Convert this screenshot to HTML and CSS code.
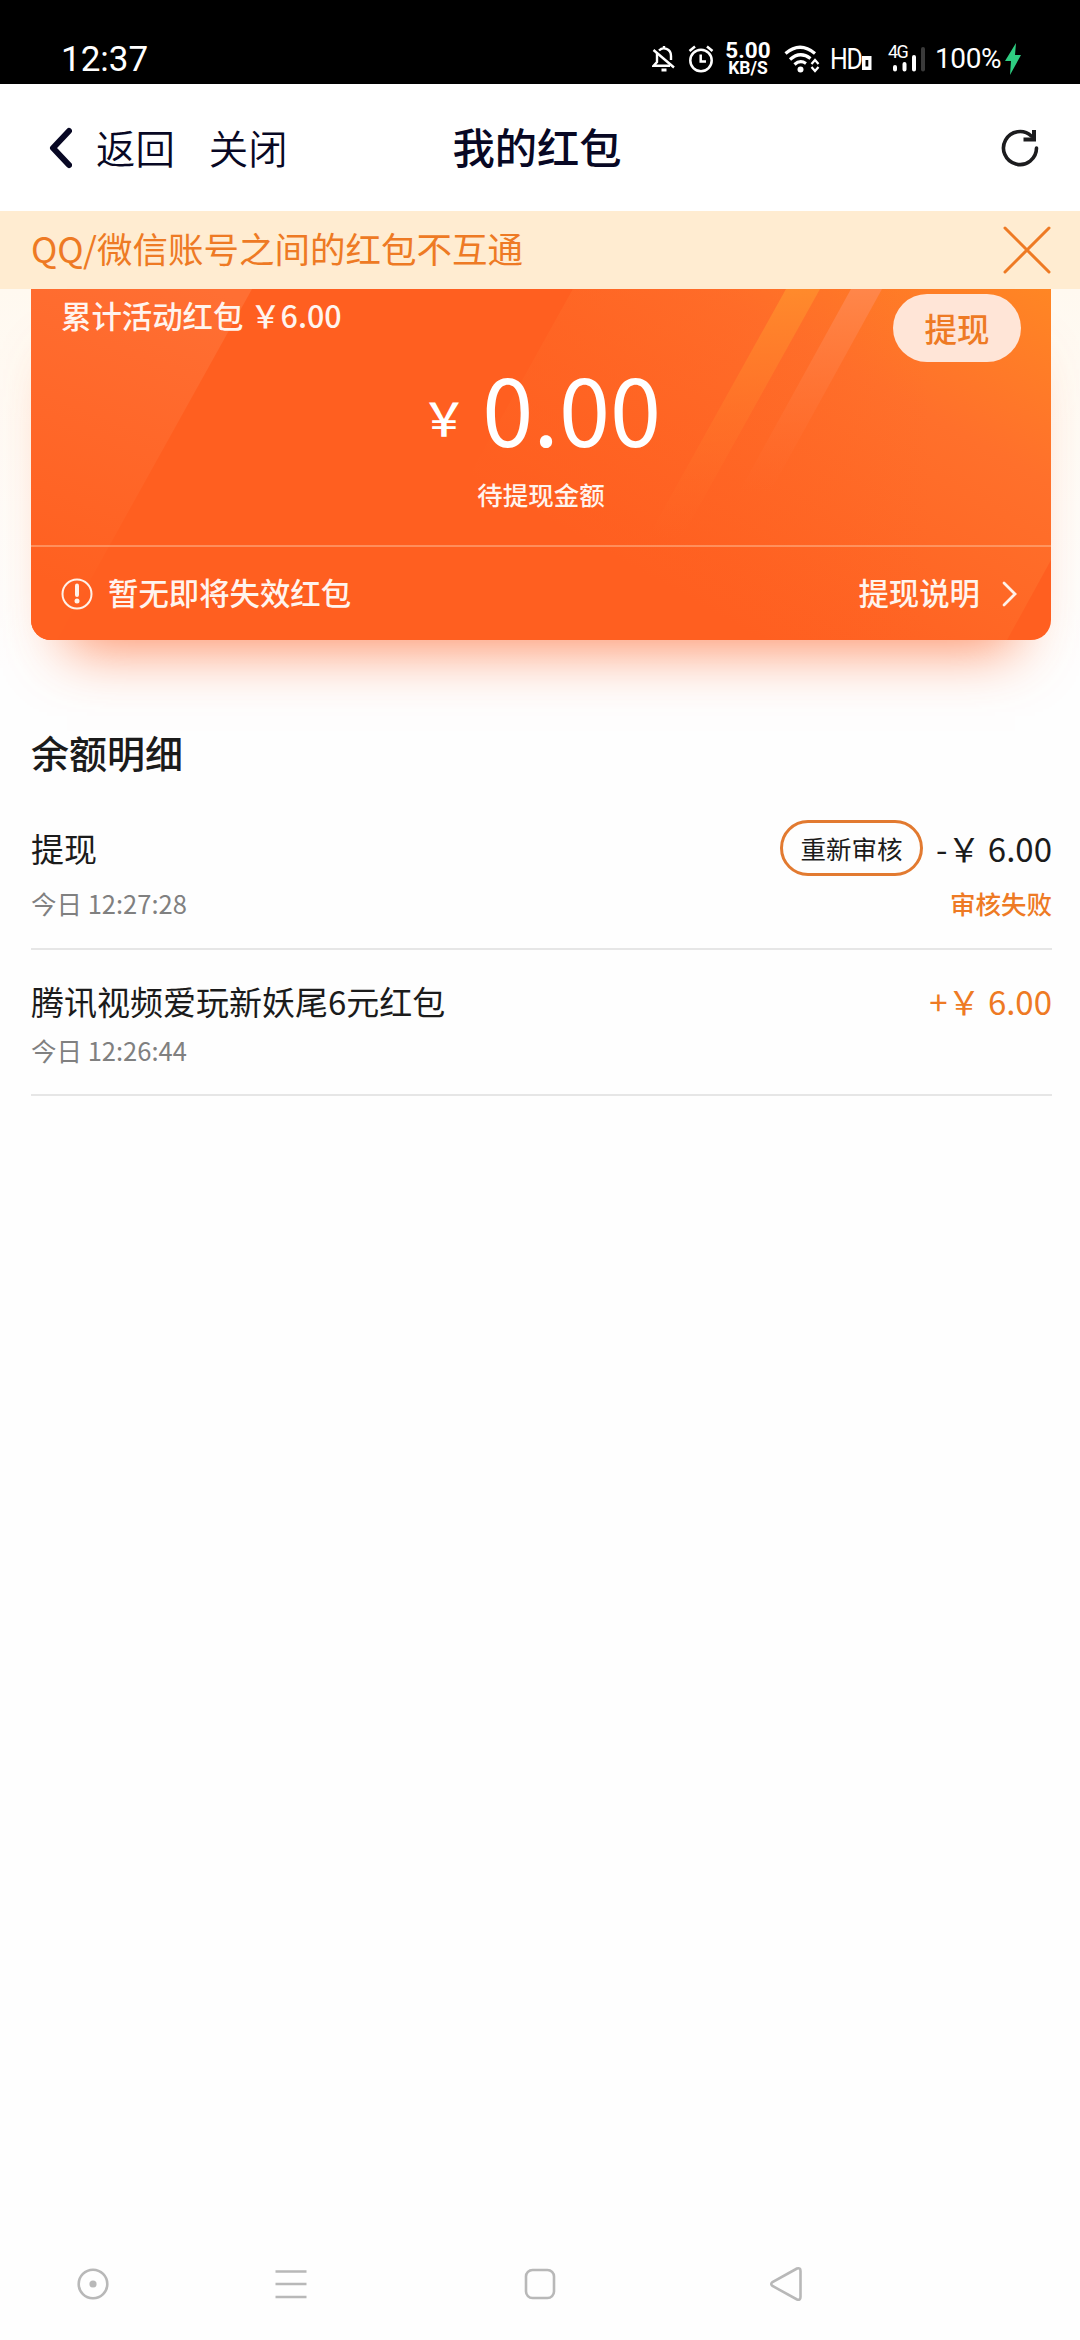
FILE: index.html
```html
<!DOCTYPE html>
<html lang="zh-CN">
<head>
<meta charset="utf-8">
<title>我的红包</title>
<link rel="stylesheet" href="styles.css">
</head>
<body>
<div class="screen">
  <header class="status">
    <span class="clock">12:37</span>
    <svg class="bell" width="24" height="28" viewBox="0 0 24 28" fill="none" stroke="#fff" stroke-width="2.4"><path d="M5 8v9l-3.500 3.800H18M7 5.500C11 1.500 19 3.500 19 11v4"/><path d="M12 1v3M1.500 5L22 22.500"/><path d="M9.500 25h5" stroke-width="3"/></svg>
    <svg class="alarm" width="26" height="28" viewBox="0 0 26 28" fill="none" stroke="#fff" stroke-width="2.500"><circle cx="13" cy="15.500" r="10.700"/><path d="M1.500 6L7 1.500M24.500 6L19 1.500M12.700 9.500v7H18"/></svg>
    <div class="speed"><b>5.00</b><b class="unit">KB/S</b></div>
    <svg class="wifi" width="36" height="30" viewBox="0 0 36 30" fill="none" stroke="#fff" stroke-width="3.200"><path d="M1.500 9.500Q16 -3 31 9.500"/><path d="M6 15.500Q16 6.500 26.500 14.500"/><path d="M10.500 20.500Q16 15.500 22 19.500"/><circle cx="16.500" cy="25.500" r="3" fill="#fff" stroke="none"/><path d="M27.500 20l3.500-4 3.500 4M27.500 23l3.500 4 3.500-4" stroke-width="2.200"/></svg>
    <span class="hd">HD</span>
    <svg class="sim" width="10" height="14" viewBox="0 0 10 14"><path fill="#fff" fill-rule="evenodd" d="M0 0h9.500v14H0zM3.500 4v6.500h2.800V4z"/></svg>
    <div class="signal">
      <span class="gen">4G</span>
      <svg width="36" height="28" viewBox="0 0 36 28" stroke="#fff" stroke-width="4" stroke-linecap="round"><path d="M7 22v2.500M16.500 19v5.500M26 12v12.500"/><path d="M35 4v20.500" stroke="#3a3a3a"/></svg>
    </div>
    <span class="battery">100%</span>
    <svg class="bolt" width="16" height="32" viewBox="0 0 16 32"><path fill="#2fce82" d="M11 0L0 18h6L5 32 16 12h-6z"/></svg>
  </header>

  <nav class="bar">
    <div class="left">
      <svg class="back" width="24" height="42" viewBox="0 0 24 42" fill="none" stroke="#080824" stroke-width="6" stroke-linecap="round" stroke-linejoin="round"><path d="M21 4L5 21l16 17"/></svg>
      <span>返回</span><span class="exit">关闭</span>
    </div>
    <h1>我的红包</h1>
    <svg class="reload" width="42" height="42" viewBox="0 0 42 42" fill="none" stroke="#1c1c1e" stroke-width="3.600"><path d="M37.500 21a16.500 16.500 0 1 1-5.200-12" stroke-linecap="round"/><path d="M35 3v9.500H24.500" stroke-width="4"/></svg>
  </nav>

  <div class="notice">
    <span>QQ/微信账号之间的红包不互通</span>
    <svg width="48" height="48" viewBox="0 0 48 48" stroke="#ee7a24" stroke-width="3" stroke-linecap="round"><path d="M2 2l44 44M46 2L2 46"/></svg>
  </div>

  <main>
    <section class="card">
      <svg class="rays" width="1020" height="351" viewBox="0 0 1020 351">
        <defs>
          <linearGradient id="l" gradientUnits="userSpaceOnUse" x1="180" y1="0" x2="60" y2="310"><stop stop-color="#ff6f33"/><stop offset="1" stop-color="#ff6020"/></linearGradient>
          <linearGradient id="r" gradientUnits="userSpaceOnUse" x1="1020" y1="0" x2="800" y2="390"><stop stop-color="#ff8624"/><stop offset=".38" stop-color="#ff702b"/><stop offset="1" stop-color="#ff5f20"/></linearGradient>
          <linearGradient id="m" gradientUnits="userSpaceOnUse" x1="0" y1="0" x2="0" y2="250"><stop stop-color="#ff8a2c"/><stop offset="1" stop-color="#ff6a28" stop-opacity="0"/></linearGradient>
          <linearGradient id="n" gradientUnits="userSpaceOnUse" x1="0" y1="0" x2="0" y2="205"><stop stop-color="#ff864a"/><stop offset="1" stop-color="#ff6e30" stop-opacity="0"/></linearGradient>
          <linearGradient id="f" gradientUnits="userSpaceOnUse" x1="440" y1="0" x2="900" y2="0"><stop stop-color="#ff5f20"/><stop offset="1" stop-color="#ff5f20" stop-opacity="0"/></linearGradient>
        </defs>
        <path fill="url(#l)" d="M0 0h221L26 351H0z"/>
        <path fill="url(#r)" d="M542 0h478v271l-44 80H347z"/>
        <path fill="url(#f)" opacity=".55" d="M542 0h478v271l-44 80H347z"/>
        <path fill="url(#m)" d="M755 0h34L650 250h-34z"/>
        <path fill="url(#n)" d="M820 0h31L738 205h-31z"/>
      </svg>
      <div class="top"><span>累计活动红包 ￥6.00</span><button>提现</button></div>
      <div class="money"><span class="yen">￥ </span>0.00</div>
      <div class="label">待提现金额</div>
      <div class="foot">
        <svg width="32" height="32" viewBox="0 0 32 32" fill="none" stroke="#fff1e8"><circle cx="16" cy="16" r="14.500" stroke-width="2"/><path d="M16 7.500v9.500" stroke-width="4" stroke-linecap="round"/><circle cx="16" cy="23" r="2.500" fill="#fff1e8" stroke="none"/></svg>
        <span class="none">暂无即将失效红包</span>
        <span>提现说明</span>
        <svg class="go" width="16" height="28" viewBox="0 0 16 28" fill="none" stroke="#fff1e8" stroke-width="2.800" stroke-linecap="round"><path d="M2 3l11 11L2 25"/></svg>
      </div>
    </section>

    <h2>余额明细</h2>
    <div class="record first">
      <div class="line"><span>提现</span><span class="retry">重新审核</span><span>-￥ 6.00</span></div>
      <div class="sub"><span>今日 12:27:28</span><span class="fail">审核失败</span></div>
    </div>
    <div class="record second">
      <div class="line"><span>腾讯视频爱玩新妖尾6元红包</span><span class="income">+￥ 6.00</span></div>
      <div class="sub"><span>今日 12:26:44</span></div>
    </div>
  </main>

  <footer class="keys">
    <svg width="34" height="36" viewBox="0 0 34 36"><circle cx="17" cy="18" r="14.300"/><circle class="dot" cx="17" cy="18" r="3.600"/></svg>
    <svg width="34" height="36" viewBox="0 0 34 36"><path d="M1.500 5.500h31M1.500 18h31M1.500 31h31"/></svg>
    <svg width="34" height="36" viewBox="0 0 34 36"><rect x="3" y="4" width="28" height="28" rx="6.500"/></svg>
    <svg width="34" height="36" viewBox="0 0 34 36"><path d="M28 2.500L3.500 16q-2.500 2 0 4L28 33.500q3.500 1 3.500-2.500V5q0-3.500-3.500-2.500z"/></svg>
  </footer>
</div>
</body>
</html>
```

FILE: styles.css
```css
* { box-sizing: border-box; }

body {
  margin: 0;
  background: #fefefe;
  color: #1b1b1b;
  font-family: "Noto Sans CJK SC", sans-serif;
}

.screen {
  width: 1080px;
  height: 2340px;
  display: flex;
  flex-direction: column;
  white-space: pre;
}

svg { display: block; flex: none; }

.status {
  height: 84px;
  padding: 33px 0 0 61px;
  display: flex;
  align-items: center;
  background: #000;
  color: #fff;
  font-family: Roboto, sans-serif;
}

.clock { width: 591px; font-size: 35px; line-height: 51px; padding-top: 1px; }
.alarm { margin-left: 12px; }
.speed {
  width: 46px;
  margin-left: 11px;
  display: flex;
  flex-direction: column;
  align-items: center;
  font-size: 22.5px;
  line-height: 19px;
}
.unit { font-size: 17.5px; line-height: 17px; }
.wifi { margin-left: 13px; }
.hd { width: 32px; margin-left: 10px; font-size: 29px; letter-spacing: -1.5px; transform-origin: left; transform: scaleX(0.86); }
.sim { margin: 8px 0 0 0; }
.signal { display: flex; margin-left: 16px; width: 47px; }
.gen { width: 0; font-size: 18px; line-height: 14px; letter-spacing: -1.5px; }
.signal svg { overflow: visible; }
.battery { width: 70px; font-size: 28px; letter-spacing: -0.4px; }

.bar {
  height: 127px;
  padding: 0 54px 0 48px;
  display: grid;
  grid-template-columns: 1fr auto 1fr;
  align-items: center;
  background: #fff;
  color: #080824;
}
.left { display: flex; align-items: center; font-size: 39.4px; font-weight: 350; line-height: 56px; }
.left span { margin-left: 24px; padding-bottom: 2px; }
.left .exit { margin-left: 34px; }
.bar h1 { margin: 0 0 4px; font-size: 42.3px; font-weight: 500; line-height: 60px; }
.reload { justify-self: end; margin-right: -15px; }

.notice {
  height: 78px;
  padding: 0 29px 0 31px;
  display: flex;
  align-items: center;
  justify-content: space-between;
  background: #ffecd1;
  color: #ee7a24;
  font-size: 35.5px;
}
.notice span { padding-bottom: 5px; }

main {
  flex: 1;
  display: flex;
  flex-direction: column;
  padding: 0 29px 0 31px;
  background: linear-gradient(#fff9f0, #fefefe 380px);
}

.card {
  position: relative;
  height: 351px;
  width: 1020px;
  display: flex;
  flex-direction: column;
  align-items: center;
  border-radius: 0 0 20px 20px;
  background: #ff5f20;
  box-shadow: 0 44px 56px -36px rgba(255, 96, 34, 0.72);
  color: #fff4ee;
  font-size: 30.4px;
  font-weight: 500;
}
.card > * { position: relative; }
.card .rays { position: absolute; left: 0; top: 0; border-radius: 0 0 20px 20px; }

.top {
  align-self: stretch;
  height: 73px;
  padding: 5px 30px 0 30px;
  display: flex;
  justify-content: space-between;
}
.top span { line-height: 42px; }
.top button {
  width: 128px;
  height: 68px;
  padding: 0 0 2px;
  border: 0;
  border-radius: 34px;
  background: #ffe5d7;
  color: #ee7a24;
  font: 500 32.5px "Noto Sans CJK SC", sans-serif;
}
.money { height: 107px; color: #fff; font-size: 92px; font-weight: 400; line-height: 90px; }
.yen { display: inline-block; margin-right: 5px; font-size: 46px; font-weight: 500; line-height: 46px; vertical-align: 11px; }
.label { height: 76px; font-size: 25.5px; line-height: 50px; }
.foot {
  align-self: stretch;
  flex: 1;
  padding: 0 33px 0 30px;
  display: flex;
  align-items: center;
  border-top: 2px solid rgba(255, 190, 150, 0.5);
}
.foot span { padding-bottom: 4px; }
.none { flex: 1; margin-left: 15px; }
.go { margin-left: 22px; }

h2 { margin: 80px 0 0; height: 100px; font-size: 38px; font-weight: 500; line-height: 64px; }

.record { display: flex; flex-direction: column; width: 1021px; border-bottom: 2px solid #e6e6e6; }
.first { height: 130px; }
.second { height: 146px; padding-top: 23px; }
.line { display: flex; align-items: center; height: 56px; font-size: 33px; line-height: 56px; }
.line span:first-child { flex: 1; }
.retry {
  width: 143px;
  height: 56px;
  margin-right: 13px;
  border: 3px solid #e27a30;
  border-radius: 28px;
  text-align: center;
  font-size: 25.5px;
  line-height: 50px;
}
.income { color: #ee7a24; }
.sub { display: flex; justify-content: space-between; font-size: 25.5px; line-height: 54px; color: #808080; }
.second .sub { line-height: 42px; }
.fail { color: #ee7a24; font-weight: 500; }

.keys {
  height: 112px;
  padding: 0 278px 0 76px;
  display: grid;
  grid-template-columns: 198px 249px 246px auto;
  align-items: center;
  fill: none;
  stroke: #b8b8b8;
  stroke-width: 2.6;
}
.dot { fill: #b8b8b8; stroke: none; }
```
